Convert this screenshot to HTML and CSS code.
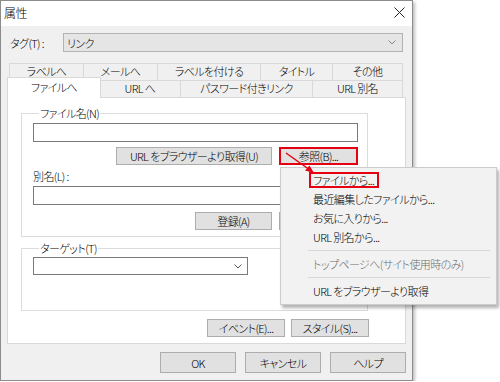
FILE: index.html
```html
<!DOCTYPE html>
<html lang="ja">
<head>
    <meta charset="UTF-8">
    <meta name="viewport" content="width=device-width, initial-scale=1.0">
    <title>属性</title>
    <link rel="stylesheet" href="styles.css">
</head>
<body>
    <div class="dialog">
        <div class="titlebar">
            <span class="title">属性</span>
            <svg class="close" width="11" height="11" viewBox="0 0 11 11">
                <path d="M0.5 0.5L10.5 10.5M10.5 0.5L0.5 10.5" stroke="#222" stroke-width="1" fill="none"/>
            </svg>
        </div>

        <div class="tag-row">
            <span class="tag-label">タグ(T) :</span>
            <div class="combo combo-tag">
                <span class="combo-text">リンク</span>
                <svg class="chevron" width="8" height="5" viewBox="0 0 8 5">
                    <path d="M0.5 0.5L4 4L7.5 0.5" stroke="#8a8a8a" fill="none"/>
                </svg>
            </div>
        </div>

        <div class="tabs">
            <div class="tab-row">
                <div class="tab tab-labelto">ラベルへ</div>
                <div class="tab tab-mail">メールへ</div>
                <div class="tab tab-setlabel">ラベルを付ける</div>
                <div class="tab tab-title">タイトル</div>
                <div class="tab tab-other">その他</div>
            </div>
            <div class="tab-row">
                <div class="tab tab-file active">ファイルへ</div>
                <div class="tab tab-url">URL へ</div>
                <div class="tab tab-password">パスワード付きリンク</div>
                <div class="tab tab-alias">URL 別名</div>
            </div>
        </div>

        <div class="panel">
            <fieldset class="group group-file">
                <legend>ファイル名(N)</legend>
                <div class="textbox"></div>
                <div class="button-row">
                    <button class="btn btn-wide">URL をブラウザーより取得(U)</button>
                    <button class="btn btn-side marked">参照(B)...</button>
                </div>
                <div class="field-label">別名(L) :</div>
                <div class="textbox"></div>
                <div class="button-row row-register">
                    <button class="btn btn-register">登録(A)</button>
                    <button class="btn btn-side"></button>
                </div>
            </fieldset>

            <fieldset class="group group-target">
                <legend>ターゲット(T)</legend>
                <div class="combo combo-target">
                    <span class="combo-text"></span>
                    <svg class="chevron" width="8" height="5" viewBox="0 0 8 5">
                        <path d="M0.5 0.5L4 4L7.5 0.5" stroke="#555" fill="none"/>
                    </svg>
                </div>
            </fieldset>

            <div class="panel-buttons">
                <button class="btn btn-panel">イベント(E)...</button>
                <button class="btn btn-panel">スタイル(S)...</button>
            </div>
        </div>

        <div class="footer">
            <button class="btn btn-footer">OK</button>
            <button class="btn btn-footer">キャンセル</button>
            <button class="btn btn-footer">ヘルプ</button>
        </div>
    </div>

    <!-- popup menu from the 参照 button -->
    <div class="menu">
        <div class="menu-item"><span class="marked-text">ファイルから...</span></div>
        <div class="menu-item">最近編集したファイルから...</div>
        <div class="menu-item">お気に入りから...</div>
        <div class="menu-item">URL 別名から...</div>
        <div class="menu-sep"></div>
        <div class="menu-item disabled">トップページへ(サイト使用時のみ)</div>
        <div class="menu-sep"></div>
        <div class="menu-item">URL をブラウザーより取得</div>
    </div>

    <svg class="arrow" width="34" height="28" viewBox="0 0 34 28">
        <path d="M2 3L26 20" stroke="#e50012" stroke-width="1.5" fill="none"/>
        <path d="M30 23L21 20.5L25.5 15.5Z" fill="#e50012"/>
    </svg>
</body>
</html>
```

FILE: styles.css
```css
body {
    margin: 0;
    background-color: #fff;
    color: #000;
    font-family: "Noto Sans CJK JP", "Noto Sans", sans-serif;
    font-size: 11px;
    font-weight: 300;
    letter-spacing: -0.6px;
    font-feature-settings: "palt";
}

.dialog {
    box-sizing: border-box;
    width: 413px;
    height: 381px;
    border: 1px solid #8c8c8c;
    background-color: #f0f0f0;
    box-shadow: 2px 2px 3px rgba(0, 0, 0, 0.25);
}

.titlebar {
    height: 25px;
    background-color: #fff;
    display: flex;
    align-items: center;
    justify-content: space-between;
    padding: 0 7px 0 3px;
}

.title {
    font-size: 12px;
    line-height: 14px;
    margin-top: -2px;
}

.close {
    margin-top: -2px;
}

.tag-row {
    display: flex;
    align-items: center;
    margin-top: 7px;
    padding-left: 9px;
    height: 19px;
}

.tag-label {
    width: 53px;
}

.combo {
    box-sizing: border-box;
    display: flex;
    align-items: center;
    justify-content: space-between;
    border: 1px solid #7a7a7a;
    background-color: #fff;
}

.combo-tag {
    width: 340px;
    height: 19px;
    background-color: #e5e5e5;
    border-color: #b3b3b3;
    padding: 0 6px 0 3px;
}

.combo-target {
    width: 215px;
    height: 18px;
    margin-top: 2px;
    padding: 0 5px 0 3px;
}

.tabs {
    margin: 11px 0 0 8px;
}

.tab-row {
    display: flex;
    align-items: flex-start;
}

.tab {
    box-sizing: border-box;
    height: 17px;
    border: 1px solid #d9d9d9;
    border-bottom: none;
    margin-left: -1px;
    text-align: center;
    line-height: 15px;
    background-color: #f0f0f0;
}

.tab:first-child {
    margin-left: 0;
}

.tab-labelto { width: 75px; }
.tab-mail { width: 75px; }
.tab-setlabel { width: 104px; }
.tab-title { width: 73px; }
.tab-other { width: 71px; }

.tab-file { width: 94px; }
.tab-url { width: 82px; }
.tab-password { width: 133px; }
.tab-alias { width: 91px; }

.tab.active {
    position: relative;
    z-index: 1;
    height: 21px;
    margin: -3px 0 -1px -2px;
    padding-top: 2px;
    background-color: #fff;
    line-height: 15px;
}

.tab.active + .tab {
    margin-left: -2px;
}

.panel {
    box-sizing: border-box;
    width: 399px;
    height: 247px;
    margin-left: 6px;
    border: 1px solid #d9d9d9;
    background-color: #fff;
    padding: 8px 0 0 13px;
}

.group {
    box-sizing: border-box;
    width: 347px;
    margin: 0;
    padding: 0 9px 6px 11px;
    border: 1px solid #dcdcdc;
    min-width: 0;
}

.group legend {
    padding: 0 1px;
    margin-left: 6px;
    line-height: 14px;
}

.group-target {
    margin-top: 4px;
    padding-bottom: 35px;
}

.textbox {
    box-sizing: border-box;
    height: 19px;
    margin-top: 3px;
    border: 1px solid #7a7a7a;
    background-color: #fff;
}

.button-row {
    display: flex;
    justify-content: flex-end;
    gap: 7px;
    margin-top: 5px;
}

.row-register {
    margin-top: 7px;
}

.field-label {
    line-height: 14px;
    margin-top: 4px;
}

.btn {
    box-sizing: border-box;
    height: 18px;
    padding: 0;
    border: 1px solid #adadad;
    background-color: #e1e1e1;
    color: #000;
    font-family: inherit;
    font-size: 11px;
    font-weight: 300;
    letter-spacing: -0.6px;
    font-feature-settings: "palt";
    line-height: 14px;
}

.btn-wide { width: 156px; }
.btn-side { width: 79px; }
.btn-register { width: 77px; }

.btn.marked {
    border: 2px solid #e50012;
}

.panel-buttons {
    display: flex;
    justify-content: flex-end;
    gap: 6px;
    margin: 8px 36px 0 0;
}

.btn-panel { width: 78px; }

.footer {
    display: flex;
    justify-content: flex-end;
    gap: 9px;
    margin-top: 8px;
    padding-right: 6px;
}

.btn-footer {
    width: 76px;
    height: 21px;
}

.menu {
    position: absolute;
    left: 280px;
    top: 167px;
    box-sizing: border-box;
    width: 217px;
    padding: 3px 0;
    border: 1px solid #cccccc;
    background-color: #f2f2f2;
    box-shadow: 2px 3px 3px rgba(0, 0, 0, 0.3);
}

.menu-item {
    height: 19px;
    line-height: 19px;
    padding-left: 32px;
    white-space: nowrap;
}

.menu-item.disabled {
    color: #6d6d6d;
}

.marked-text {
    display: inline-block;
    line-height: 12px;
    padding: 0 3px 0 2px;
    margin-left: -4px;
    border: 2px solid #e50012;
}

.menu-sep {
    height: 1px;
    margin: 3px 6px 4px 27px;
    background-color: #d7d7d7;
}

.arrow {
    position: absolute;
    left: 284px;
    top: 150px;
}
```
